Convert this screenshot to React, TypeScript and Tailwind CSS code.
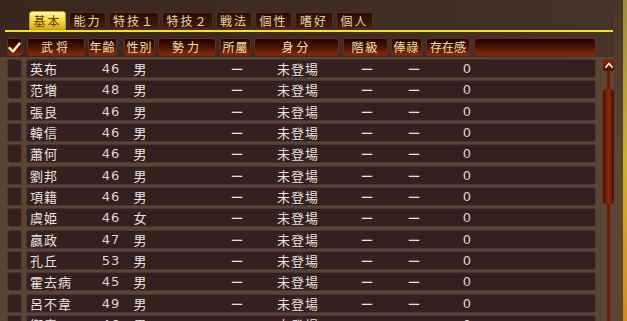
import React from 'react';

type Officer = { name: string; age: number; sex: string };

const officers: Officer[] = [
  { name: '英布', age: 46, sex: '男' },
  { name: '范増', age: 48, sex: '男' },
  { name: '張良', age: 46, sex: '男' },
  { name: '韓信', age: 46, sex: '男' },
  { name: '蕭何', age: 46, sex: '男' },
  { name: '劉邦', age: 46, sex: '男' },
  { name: '項籍', age: 46, sex: '男' },
  { name: '虞姫', age: 46, sex: '女' },
  { name: '嬴政', age: 47, sex: '男' },
  { name: '孔丘', age: 53, sex: '男' },
  { name: '霍去病', age: 45, sex: '男' },
  { name: '呂不韋', age: 49, sex: '男' },
  { name: '衛青', age: 46, sex: '男' },
];

const tabs = [
  { label: '基本', w: 'w-[37px]' },
  { label: '能力', w: 'w-[37px]' },
  { label: '特技１', w: 'w-[50px]' },
  { label: '特技２', w: 'w-[51px]' },
  { label: '戦法', w: 'w-[36px]' },
  { label: '個性', w: 'w-[37px]' },
  { label: '嗜好', w: 'w-[38px]' },
  { label: '個人', w: 'w-[37px]' },
];

// header cells: label, width + left margin
const headers = [
  { label: '武将', cls: 'w-[58px] ml-[5px] tracking-[3px]' },
  { label: '年齢', cls: 'w-[29px] ml-[3px] tracking-[1px]' },
  { label: '性別', cls: 'w-[31px] ml-[7px] tracking-[1px]' },
  { label: '勢力', cls: 'w-[58px] ml-[3px] tracking-[3px]' },
  { label: '所屬', cls: 'w-[31px] ml-[4px] tracking-[1px]' },
  { label: '身分', cls: 'w-[85px] ml-[3px] tracking-[3px]' },
  { label: '階級', cls: 'w-[45px] ml-[4px] tracking-[2px]' },
  { label: '俸祿', cls: 'w-[31px] ml-[3px] tracking-[1px]' },
  { label: '存在感', cls: 'w-[44px] ml-[4px] tracking-[0px]' },
  { label: '', cls: 'w-[122px] ml-[4px]' },
];

const cjk = { fontFamily: '"Noto Sans CJK JP", "Noto Sans", sans-serif' };
const num = { fontFamily: '"DejaVu Sans", "Liberation Sans", sans-serif' };

function HeaderCell({ label, cls }: { label: string; cls: string }) {
  return (
    <div
      className={`${cls} shrink-0 h-[18px] flex items-center justify-center whitespace-nowrap rounded-[3px] border border-[#6e2a12] bg-gradient-to-b from-[#1e0400] via-[#4a1204] to-[#8a2c0a] text-[12px] text-[#efe0a8] leading-none`}
    >
      {label}
    </div>
  );
}

export default function App() {
  return (
    <div
      className="w-[627px] h-[321px] overflow-hidden flex bg-[#3d2a21] text-[13px]"
      style={cjk}
    >
      <div className="w-[614px] shrink-0 flex flex-col bg-gradient-to-r from-[#3a2820] via-[#3e2b22] to-[#46332a]">
        {/* Tabs */}
        <div className="shrink-0 flex items-end gap-[3px] pl-[29px] h-[30px]">
          {tabs.map((t, i) =>
            i === 0 ? (
              <div
                key={t.label}
                className={`${t.w} h-[19px] flex items-center justify-center whitespace-nowrap rounded-t-[3px] border border-[#c09a18] bg-gradient-to-b from-[#fff79a] via-[#f3dc3c] to-[#d4ad16] text-[12px] tracking-[2px] text-[#6a3a00] leading-none`}
              >
                {t.label}
              </div>
            ) : (
              <div
                key={t.label}
                className={`${t.w} h-[17px] mb-[1px] flex items-center justify-center whitespace-nowrap rounded-[3px] border border-[#5c2a18] bg-gradient-to-b from-[#2a0e06] to-[#441a0c] text-[12px] tracking-[2px] text-[#e6d6a0] leading-none`}
              >
                {t.label}
              </div>
            ),
          )}
        </div>
        <div className="shrink-0 ml-[5px] w-[608px] h-[2px] bg-[#f2e420]" />

        {/* Header row */}
        <div className="shrink-0 flex items-center mt-[6px] pl-[7px]">
          <div className="w-[15px] h-[18px] shrink-0 flex items-center justify-center rounded-[3px] border border-[#6e2a12] bg-gradient-to-b from-[#1e0400] via-[#4a1204] to-[#8a2c0a]">
            <svg width="13" height="11" viewBox="0 0 13 11">
              <path d="M1.5 6 L5 9.5 L11.5 1.5" stroke="#fbf3c4" strokeWidth="2.4" fill="none" strokeLinecap="round" strokeLinejoin="round" />
            </svg>
          </div>
          {headers.map((h, i) => (
            <HeaderCell key={i} label={h.label} cls={h.cls} />
          ))}
        </div>

        {/* Body */}
        <div className="flex-1 min-h-0 overflow-hidden mt-[1px] flex bg-[#5a4434]">
          <div className="shrink-0 flex flex-col gap-[2.33px] pt-[2px] pl-[7px]">
            {officers.map((o) => (
              <div key={o.name} className="shrink-0 flex items-center gap-[4px] h-[19px]">
                <div className="w-[15px] h-[19px] rounded-[3px] border border-[#4c3530] bg-[#33201f]" />
                <div className="w-[570px] h-[19px] flex items-center rounded-[3px] border border-[#4c3530] bg-[#33201f] text-[#e8e2de] leading-none">
                  <span className="w-[69px] pl-[3px] tracking-[1px]">{o.name}</span>
                  <span className="w-[30px] text-center text-[13px] tracking-[1px] text-[#dcd6d2]" style={num}>
                    {o.age}
                  </span>
                  <span className="w-[28px] text-center">{o.sex}</span>
                  <span className="w-[67px]" />
                  <span className="w-[32px] text-center">ー</span>
                  <span className="w-[90px] text-center tracking-[1px]">未登場</span>
                  <span className="w-[48px] text-center">ー</span>
                  <span className="w-[46px] text-center">ー</span>
                  <span className="w-[60px] text-center text-[13px] text-[#dcd6d2]" style={num}>
                    0
                  </span>
                </div>
              </div>
            ))}
          </div>

          {/* Scrollbar */}
          <div className="shrink-0 ml-[7px] w-[11px] flex flex-col items-center pt-[2px]">
            <div className="shrink-0 w-[11px] h-[12px] rounded-[2px] bg-gradient-to-b from-[#8a2a0c] to-[#4a1004] flex items-center justify-center">
              <svg width="8" height="6" viewBox="0 0 8 6">
                <path d="M1 5 L4 1.5 L7 5" stroke="#fbf0c8" strokeWidth="1.8" fill="none" strokeLinecap="round" strokeLinejoin="round" />
              </svg>
            </div>
            <div className="shrink-0 w-[3px] h-[18px] bg-[#6a1a08]" />
            <div className="shrink-0 w-[11px] h-[115px] rounded-[3px] bg-gradient-to-r from-[#4a0e02] via-[#8a2a0c] to-[#4a0e02]" />
            <div className="w-[3px] flex-1 bg-[#6a1a08]" />
          </div>
        </div>
      </div>

      {/* Right frame edge */}
      <div className="w-[13px] shrink-0 flex">
        <div className="w-[9px] bg-gradient-to-b from-[#4a3528] via-[#5a4434] to-[#5e4535]" />
        <div className="w-[4px] bg-gradient-to-b from-[#9c8a40] via-[#c8b030] to-[#d08a20]" />
      </div>
    </div>
  );
}
